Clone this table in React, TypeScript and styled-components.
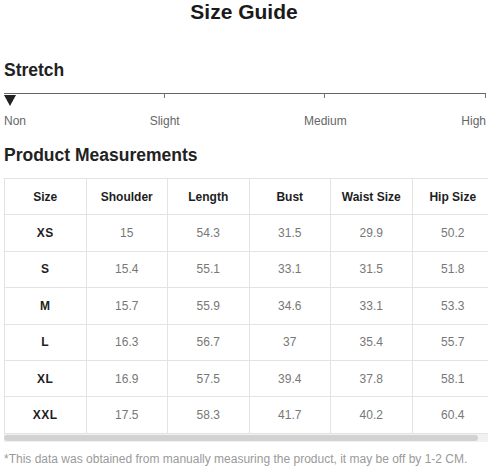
import React from "react";
import styled, { createGlobalStyle } from "styled-components";

const Global = createGlobalStyle`
  html, body { margin: 0; padding: 0; background: #fff; }
  body { font-family: "Liberation Sans", Arial, sans-serif; color: #222; }
`;

const Page = styled.div`
  width: 488px;
  height: 466px;
  overflow: hidden;
  padding: 0 0 0 4px;
  box-sizing: border-box;
  display: flex;
  flex-direction: column;
`;

const Title = styled.h1`
  margin: 0;
  text-align: center;
  font-family: "Liberation Sans", Arial, sans-serif;
  font-weight: 900;
  font-size: 21px;
  line-height: 24px;
  color: #1a1a1a;
  padding-right: 4px;
`;

const Heading = styled.h2<{ $top: number }>`
  margin: ${(p) => p.$top}px 0 0;
  font-size: 17.5px;
  line-height: 22px;
  font-weight: 700;
  color: #222;
`;

const Scale = styled.div`
  margin-top: 12px;
  margin-right: 2px;
  position: relative;
  display: grid;
  grid-template-columns: repeat(3, 1fr);
  border-top: 1.5px solid #666;
`;

const Segment = styled.span`
  height: 4px;
  border-right: 1px solid #777;
`;

const Marker = styled.span`
  position: absolute;
  top: 1px;
  left: 0;
  width: 0;
  height: 0;
  border-left: 6px solid transparent;
  border-right: 6px solid transparent;
  border-top: 11px solid #222;
`;

const Labels = styled.div`
  display: grid;
  grid-template-columns: repeat(6, 1fr);
  margin-top: 16px;
  margin-right: 2px;
  font-size: 12px;
  line-height: 14px;
  color: #666;
`;

const Label = styled.span<{ $align: "start" | "center" | "end"; $span: number }>`
  grid-column: span ${(p) => p.$span};
  justify-self: ${(p) => p.$align};
  white-space: nowrap;
`;

const TableWrap = styled.div`
  margin-top: 12px;
  overflow: hidden;
  width: 484px;
`;

const Table = styled.table`
  border-collapse: collapse;
  table-layout: fixed;
  width: 490px;
  font-size: 12px;
`;

const Cell = styled.td<{ $head?: boolean; $size?: boolean }>`
  width: 80.5px;
  height: 35.4px;
  padding: 0;
  border: 1px solid #e3e3e3;
  text-align: center;
  vertical-align: middle;
  font-weight: ${(p) => (p.$head || p.$size ? 700 : 400)};
  color: ${(p) => (p.$head || p.$size ? "#1e1e1e" : "#777")};
  letter-spacing: ${(p) => (p.$size ? "0.5px" : "0")};
`;

const ScrollTrack = styled.div`
  width: 484px;
  height: 8px;
  background: #f1f1f1;
  display: flex;
  align-items: center;
`;

const ScrollThumb = styled.div`
  width: 474px;
  height: 6px;
  border-radius: 3px;
  background: #d2d2d2;
`;

const Note = styled.p`
  margin: 10px 0 0;
  font-size: 12px;
  line-height: 14px;
  color: #9a9a9a;
`;

const headers = ["Size", "Shoulder", "Length", "Bust", "Waist Size", "Hip Size"];
const rows = [
  ["XS", "15", "54.3", "31.5", "29.9", "50.2"],
  ["S", "15.4", "55.1", "33.1", "31.5", "51.8"],
  ["M", "15.7", "55.9", "34.6", "33.1", "53.3"],
  ["L", "16.3", "56.7", "37", "35.4", "55.7"],
  ["XL", "16.9", "57.5", "39.4", "37.8", "58.1"],
  ["XXL", "17.5", "58.3", "41.7", "40.2", "60.4"],
];

const stops: { name: string; align: "start" | "center" | "end"; span: number }[] = [
  { name: "Non", align: "start", span: 1 },
  { name: "Slight", align: "center", span: 2 },
  { name: "Medium", align: "center", span: 2 },
  { name: "High", align: "end", span: 1 },
];

export default function App() {
  return (
    <>
      <Global />
      <Page>
        <Title>Size Guide</Title>
        <Heading $top={35}>Stretch</Heading>
        <Scale>
          <Segment />
          <Segment />
          <Segment />
          <Marker />
        </Scale>
        <Labels>
          {stops.map((s) => (
            <Label key={s.name} $align={s.align} $span={s.span}>
              {s.name}
            </Label>
          ))}
        </Labels>
        <Heading $top={16}>Product Measurements</Heading>
        <TableWrap>
          <Table>
            <tbody>
              <tr>
                {headers.map((h) => (
                  <Cell as="th" key={h} $head>
                    {h}
                  </Cell>
                ))}
              </tr>
              {rows.map((r) => (
                <tr key={r[0]}>
                  {r.map((v, i) => (
                    <Cell key={i} $size={i === 0}>
                      {v}
                    </Cell>
                  ))}
                </tr>
              ))}
            </tbody>
          </Table>
        </TableWrap>
        <ScrollTrack>
          <ScrollThumb />
        </ScrollTrack>
        <Note>*This data was obtained from manually measuring the product, it may be off by 1-2 CM.</Note>
      </Page>
    </>
  );
}
